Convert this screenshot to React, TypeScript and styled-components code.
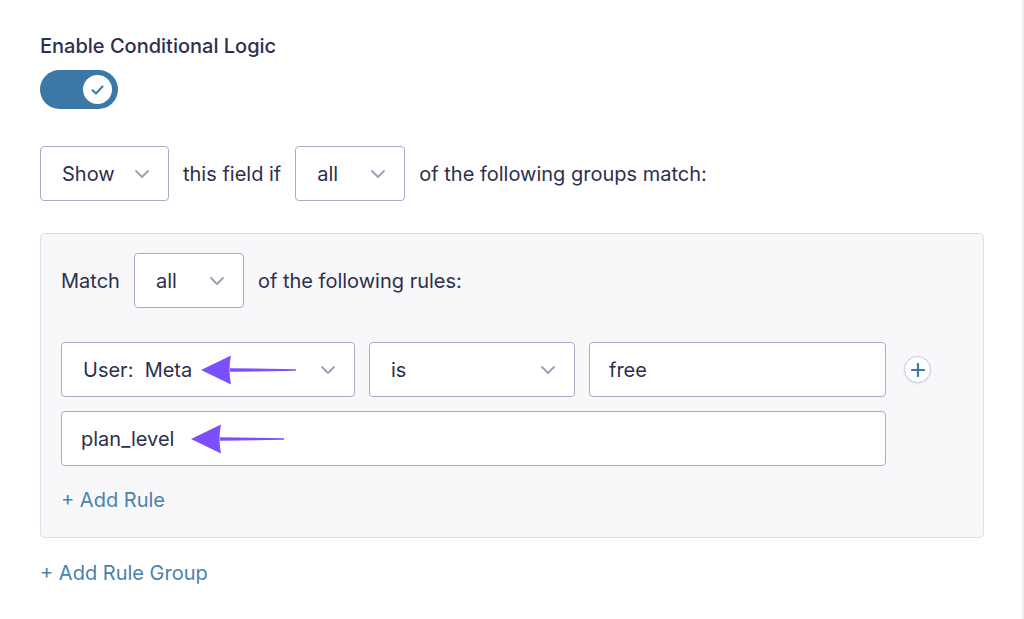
import React from "react";
import styled, { createGlobalStyle } from "styled-components";

const GlobalStyle = createGlobalStyle`
  html, body {
    margin: 0;
    padding: 0;
    background: #ffffff;
  }
  body {
    font-family: Inter, "Noto Sans", "Liberation Sans", sans-serif;
    color: #2d2f4e;
    -webkit-font-smoothing: antialiased;
  }
`;

const Page = styled.div`
  box-sizing: border-box;
  width: 1024px;
  height: 619px;
  padding: 33px 0 0 40px;
  border-right: 2px solid #ecebf6;
  overflow: hidden;
`;

const Title = styled.div`
  font-size: 20px;
  font-weight: 500;
  line-height: 26px;
  color: #2d2f4e;
`;

const Toggle = styled.button<{ $on?: boolean }>`
  display: flex;
  align-items: center;
  justify-content: ${(p) => (p.$on ? "flex-end" : "flex-start")};
  box-sizing: border-box;
  width: 78px;
  height: 39px;
  margin-top: 11px;
  padding: 0 6px;
  border: none;
  border-radius: 20px;
  background: #3b78a6;
  cursor: pointer;
`;

const Knob = styled.span`
  display: flex;
  align-items: center;
  justify-content: center;
  width: 29px;
  height: 29px;
  border-radius: 50%;
  background: #ffffff;
`;

const Sentence = styled.div`
  display: flex;
  align-items: center;
  gap: 14px;
  font-size: 20px;
  line-height: 26px;
`;

const TopSentence = styled(Sentence)`
  margin-top: 37px;
`;

const Select = styled.div<{ $w: number }>`
  box-sizing: border-box;
  display: flex;
  align-items: center;
  justify-content: space-between;
  width: ${(p) => p.$w}px;
  height: 55px;
  padding: 0 18px 0 21px;
  border: 1.5px solid #a9aacb;
  border-radius: 4px;
  background: #ffffff;
  font-size: 20px;
  color: #2d2f4e;
  flex-shrink: 0;
`;

const Input = styled.div<{ $w: number }>`
  box-sizing: border-box;
  display: flex;
  align-items: center;
  width: ${(p) => p.$w}px;
  height: 55px;
  padding: 0 19px;
  border: 1.5px solid #a9aacb;
  border-radius: 4px;
  background: #ffffff;
  font-size: 20px;
  color: #2d2f4e;
  flex-shrink: 0;
`;

const Group = styled.div`
  box-sizing: border-box;
  width: 944px;
  margin-top: 32px;
  padding: 19px 20px 24px 20px;
  border: 1.5px solid #dcdcef;
  border-radius: 5px;
  background: #f8f8fb;
`;

const Rules = styled.div`
  display: flex;
  flex-direction: column;
  gap: 14px;
  margin-top: 34px;
`;

const RuleRow = styled.div`
  display: flex;
  align-items: center;
  gap: 14px;
`;

const Label = styled.span`
  position: relative;
  white-space: pre;
`;

const PlusButton = styled.button`
  display: flex;
  align-items: center;
  justify-content: center;
  width: 27px;
  height: 27px;
  margin-left: 4px;
  padding: 0;
  border: 1.5px solid #c7c8e2;
  border-radius: 50%;
  background: #ffffff;
  box-shadow: 0 1px 2px rgba(80, 80, 130, 0.12);
  cursor: pointer;
`;

const AddLink = styled.a<{ $top: number }>`
  display: block;
  margin-top: ${(p) => p.$top}px;
  font-size: 20px;
  line-height: 26px;
  color: #4a82ad;
  text-decoration: none;
  cursor: pointer;
`;

// purple pointer laid over the field, just after its text
const Pointer = styled.svg<{ $gap: number }>`
  position: absolute;
  top: 50%;
  left: calc(100% + ${(p) => p.$gap}px);
  transform: translateY(-50%);
  pointer-events: none;
  overflow: visible;
`;

const Chevron = () => (
  <svg width="16" height="10" viewBox="0 0 16 10" fill="none">
    <path d="M2 2l6 6 6-6" stroke="#9c9db4" strokeWidth="1.8" strokeLinecap="round" strokeLinejoin="round" />
  </svg>
);

const Arrow = ({ gap, length }: { gap: number; length: number }) => (
  <Pointer $gap={gap} width={length} height="32" viewBox={`0 0 ${length} 32`}>
    <path d={`M29 14.2 L${length} 15.2 L${length} 16.8 L29 17.8 Z`} fill="#7b4ffb" />
    <path d="M0 16 L30 1.5 Q27 16 30 30.5 Z" fill="#7b4ffb" />
  </Pointer>
);

export default function App() {
  return (
    <>
      <GlobalStyle />
      <Page>
        <Title>Enable Conditional Logic</Title>
        <Toggle $on>
          <Knob>
            <svg width="13" height="10" viewBox="0 0 13 10" fill="none">
              <path d="M1.5 5.2l3.5 3.3 6.5-7" stroke="#3b78a6" strokeWidth="2" strokeLinecap="round" strokeLinejoin="round" />
            </svg>
          </Knob>
        </Toggle>

        <TopSentence>
          <Select $w={129}>
            Show <Chevron />
          </Select>
          <span>this field if</span>
          <Select $w={110}>
            all <Chevron />
          </Select>
          <span>of the following groups match:</span>
        </TopSentence>

        <Group>
          <Sentence>
            <span>Match</span>
            <Select $w={110}>
              all <Chevron />
            </Select>
            <span>of the following rules:</span>
          </Sentence>

          <Rules>
            <RuleRow>
              <Select $w={294}>
                <Label>
                  {"User:  Meta"}
                  <Arrow gap={9} length={95} />
                </Label>
                <Chevron />
              </Select>
              <Select $w={206}>
                is <Chevron />
              </Select>
              <Input $w={297}>free</Input>
              <PlusButton>
                <svg width="14" height="14" viewBox="0 0 14 14" fill="none">
                  <path d="M7 1v12M1 7h12" stroke="#3b78a6" strokeWidth="2.2" strokeLinecap="round" />
                </svg>
              </PlusButton>
            </RuleRow>
            <RuleRow>
              <Input $w={825}>
                <Label>
                  plan_level
                  <Arrow gap={17} length={93} />
                </Label>
              </Input>
            </RuleRow>
          </Rules>

          <AddLink $top={21}>+ Add Rule</AddLink>
        </Group>

        <AddLink $top={22}>+ Add Rule Group</AddLink>
      </Page>
    </>
  );
}
